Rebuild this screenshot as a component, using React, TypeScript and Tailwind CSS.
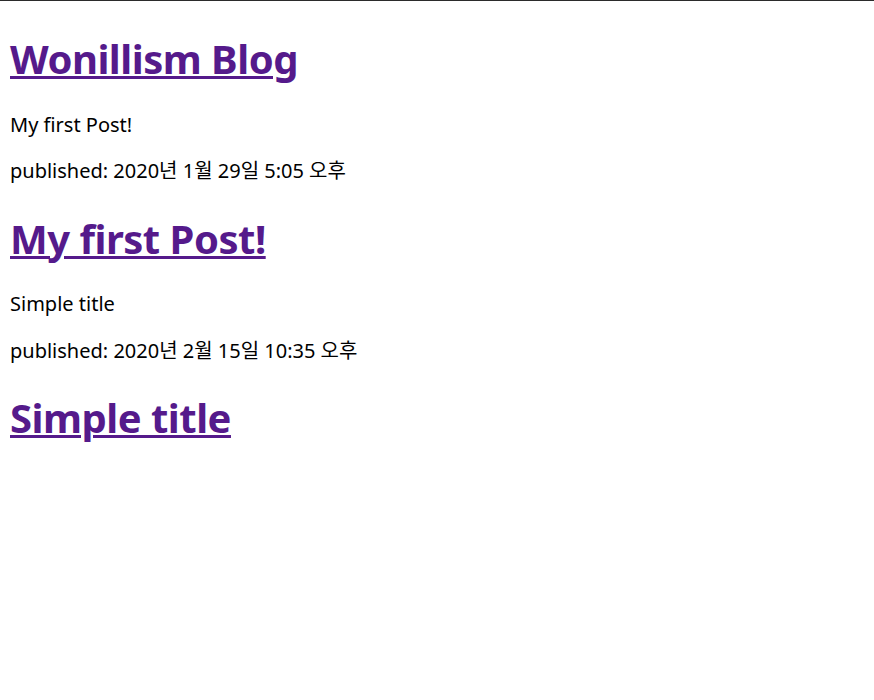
const font = "font-['Noto_Sans','Noto_Sans_CJK_KR',sans-serif]"

const posts = [
  { title: 'My first Post!', excerpt: 'Simple title', published: '2020년 2월 15일 10:35 오후' },
  { title: 'Simple title', excerpt: '', published: '' },
]

export default function App() {
  return (
    <div className={`min-h-[700px] bg-white border-t border-[#2b2b2b] pt-[4px] px-[10px] text-black ${font}`}>
      <h1 className="my-[26.8px] text-[40px] leading-[53px] font-bold tracking-[-0.5px]">
        <a href="#" className="text-[#551a8b] underline decoration-[3px]">
          Wonillism Blog
        </a>
      </h1>
      <p className="my-[20px] text-[20px] leading-[26.6px]">My first Post!</p>
      <p className="my-[20px] text-[20px] leading-[26.6px]">
        published: 2020년 1월 29일 5:05 오후
      </p>
      {posts.map((post) => (
        <div key={post.title}>
          <h1 className="my-[26.8px] text-[40px] leading-[53px] font-bold tracking-[-0.5px]">
            <a href="#" className="text-[#551a8b] underline decoration-[3px]">
              {post.title}
            </a>
          </h1>
          {post.excerpt && (
            <p className="my-[20px] text-[20px] leading-[26.6px]">{post.excerpt}</p>
          )}
          {post.published && (
            <p className="my-[20px] text-[20px] leading-[26.6px]">
              published: {post.published}
            </p>
          )}
        </div>
      ))}
    </div>
  )
}
